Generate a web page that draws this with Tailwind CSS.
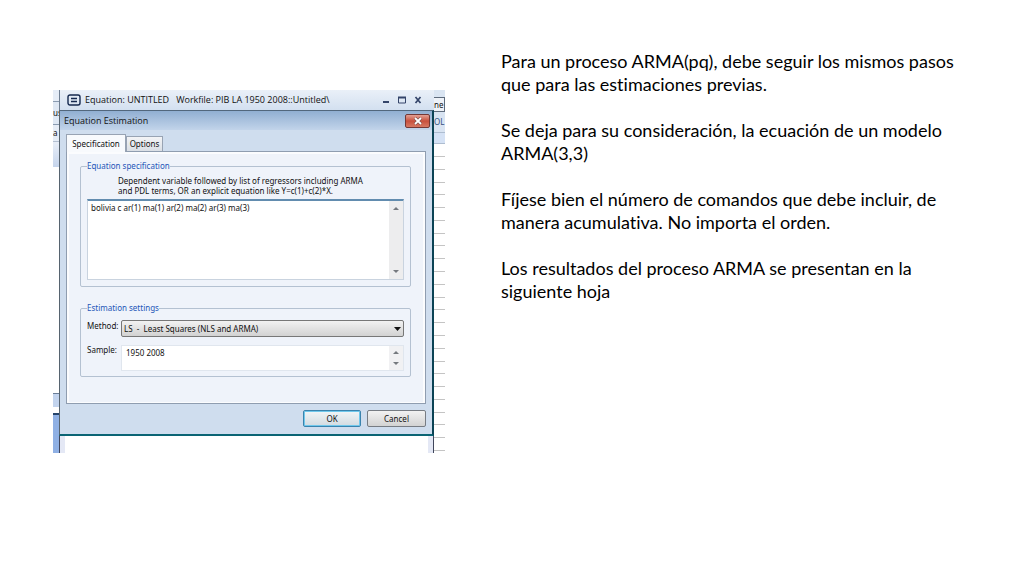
<!DOCTYPE html>
<html lang="es">
<head>
  <meta charset="UTF-8">
  <meta name="viewport" content="width=device-width, initial-scale=1.0">
  <title>Proceso ARMA</title>
  <script src="https://cdn.jsdelivr.net/npm/@tailwindcss/browser@4"></script>
</head>
<body class="bg-white">
  <main class="flex items-start gap-14 pt-[50px] pl-[53px] pr-16">

    <!-- EViews -->
    <section class="mt-10 flex w-[392px] shrink-0 overflow-hidden font-['Noto_Sans',sans-serif] text-[8px] leading-3 text-[#111]">

      <!-- Workfile window, left edge -->
      <div class="flex w-[6px] shrink-0 flex-col overflow-hidden">
        <div class="h-3 border-b border-[#8a9bb0] bg-[#e6edf7]"></div>
        <div class="flex h-[23px] items-center border-b border-[#8a9bb0] bg-[#dfe8f4]">us</div>
        <div class="flex h-[17px] items-center border-b border-[#b3bfd0] bg-[#e6edf7]">a</div>
        <div class="h-[25px] bg-linear-to-b from-[#e8eef8] to-[#c6d5ec]"></div>
        <div class="grow"></div>
        <div class="h-[14px] border-t border-[#6b7d96] bg-[#c3d4ee]"></div>
        <div class="mt-[6px] h-10 border-t-2 border-[#26446b] bg-[#8fb0e4]"></div>
      </div>

      <!-- Equation window -->
      <div class="flex grow flex-col">
        <header class="flex h-5 items-center border-l border-[#6f7f92] bg-linear-to-b from-[#eaf0f8] to-[#d3e0f0] pr-3 pl-[7px] font-['Open_Sans',sans-serif] text-[9px]">
          <svg class="mr-1 h-3 w-[14px]" viewBox="0 0 14 12" fill="none" stroke="#14284e">
            <rect x="1" y="1" width="12" height="10" rx="2" stroke-width="1.4"/>
            <path d="M4 4.5h6M4 7.5h6" stroke-width="1.4"/>
          </svg>
          <h2 class="grow whitespace-pre">Equation: UNTITLED   Workfile: PIB LA 1950 2008::Untitled\</h2>
          <div class="flex gap-2">
            <button aria-label="Minimize"><svg class="size-2" viewBox="0 0 8 8"><path d="M1 6h6" stroke="#34456a" stroke-width="2"/></svg></button>
            <button aria-label="Maximize"><svg class="size-2" viewBox="0 0 8 8"><path d="M.5 1v6h7V1" fill="none" stroke="#34456a"/><path d="M0 1.5h8" stroke="#34456a" stroke-width="2"/></svg></button>
            <button aria-label="Close window"><svg class="size-2" viewBox="0 0 8 8"><path d="M1.5 1l5 6M6.500 1l-5 6" stroke="#34456a" stroke-width="1.700"/></svg></button>
          </div>
        </header>

        <!-- Equation Estimation dialog -->
        <form class="border-t border-r-2 border-b-2 border-l border-t-[#52677d] border-r-[#0b4355] border-b-[#0a6474] border-l-[#56636f] bg-[#cfddee]">
          <div class="flex h-[19px] items-center justify-between bg-linear-to-b from-[#91afd2] to-[#c2d4ea] pr-[2px] pl-1">
            <h3 class="font-['Open_Sans',sans-serif] text-[9px]">Equation Estimation</h3>
            <button type="button" aria-label="Close" class="flex h-[14px] w-[25px] items-center justify-center rounded-xs border border-[#733836] bg-linear-to-b from-[#e2a094] via-[#c74f3d] to-[#d67863]">
              <svg class="h-2 w-[10px]" viewBox="0 0 10 8"><path d="M2 1l6 6M8 1L2 7" stroke="#6e4a4a" stroke-width="3"/><path d="M2 1l6 6M8 1L2 7" stroke="#fff" stroke-width="1.800"/></svg>
            </button>
          </div>

          <div class="px-[6px] pt-1">
            <div class="flex items-end" role="tablist">
              <button type="button" role="tab" aria-selected="true" class="relative z-10 -mb-px h-[18px] w-[60px] border border-b-0 border-[#98a3b3] bg-[#f8fafd]">Specification</button>
              <button type="button" role="tab" aria-selected="false" class="h-[15px] w-[37px] border border-b-0 border-[#98a3b3] bg-linear-to-b from-[#f3f4f6] to-[#dadfe5]">Options</button>
            </div>

            <div class="border border-[#8f9db0] bg-[#eff3fa] pt-2 pr-[14px] pb-[26px] pl-[13px] shadow-[inset_2px_2px_0_#fbfcfe,inset_-2px_-1px_0_#fbfcfe]">
              <fieldset class="rounded-xs border border-[#b4c1d1] px-[6px] pb-[6px]">
                <legend class="text-[#2456b8]">Equation specification</legend>
                <label for="equation" class="ml-[31px] block pt-1 pb-[3px] leading-[10px]">Dependent variable followed by list of regressors including ARMA<br>and PDL terms, OR an explicit equation like Y=c(1)+c(2)*X.</label>
                <div class="flex h-[81px] border border-t-2 border-[#c9d3df] border-t-[#628caf] bg-white">
                  <textarea id="equation" class="grow resize-none overflow-hidden px-[3px] pt-px outline-none">bolivia c ar(1) ma(1) ar(2) ma(2) ar(3) ma(3)</textarea>
                  <div class="flex w-[14px] flex-col items-center justify-between bg-[#ededee] py-[6px]">
                    <svg class="h-[3px] w-[6px]" viewBox="0 0 6 3"><path d="M0 3l3-3 3 3z" fill="#75797e"/></svg>
                    <svg class="h-[3px] w-[6px]" viewBox="0 0 6 3"><path d="M0 0l3 3 3-3z" fill="#75797e"/></svg>
                  </div>
                </div>
              </fieldset>

              <fieldset class="mt-[15px] rounded-xs border border-[#b4c1d1] px-[6px] pt-[6px] pb-[5px]">
                <legend class="text-[#2456b8]">Estimation settings</legend>
                <div class="flex">
                  <label for="method" class="w-[34px] shrink-0">Method:</label>
                  <div class="relative grow">
                    <select id="method" class="h-[17px] w-full appearance-none rounded-xs border border-[#777] bg-linear-to-b from-[#f2f2f2] to-[#d2d2d2] pl-[2px]">
                      <option>LS&nbsp; -&nbsp; Least Squares (NLS and ARMA)</option>
                    </select>
                    <svg class="pointer-events-none absolute top-[7px] right-[3px] h-[4px] w-[7px]" viewBox="0 0 7 4"><path d="M0 0h7L3.500 4z" fill="#111"/></svg>
                  </div>
                </div>
                <div class="mt-2 flex">
                  <label for="sample" class="w-[34px] shrink-0 leading-[10px]">Sample:</label>
                  <div class="flex h-[26px] grow border border-[#e0e6ee] bg-white">
                    <textarea id="sample" class="grow resize-none overflow-hidden px-1 pt-px outline-none">1950 2008</textarea>
                    <div class="flex w-[14px] flex-col items-center justify-between bg-[#f1f1f3] py-[5px]">
                      <svg class="h-[3px] w-[6px]" viewBox="0 0 6 3"><path d="M0 3l3-3 3 3z" fill="#75797e"/></svg>
                      <svg class="h-[3px] w-[6px]" viewBox="0 0 6 3"><path d="M0 0l3 3 3-3z" fill="#75797e"/></svg>
                    </div>
                  </div>
                </div>
              </fieldset>
            </div>
          </div>

          <div class="flex justify-end gap-[6px] px-[6px] pt-[6px] pb-[7px]">
            <button type="submit" class="h-[17px] w-[58px] rounded-xs border border-[#3a83ad] bg-linear-to-b from-[#f1f5f7] to-[#d2dbe1] shadow-[inset_0_0_0_1px_#70c8ec]">OK</button>
            <button type="button" class="h-[17px] w-[59px] rounded-xs border border-[#777c83] bg-linear-to-b from-[#f2f2f2] to-[#d3d3d3]">Cancel</button>
          </div>
        </form>

        <div class="h-[17px] border-r border-l border-[#40465c] bg-white">
          <div class="h-full border-r-[5px] border-l-[5px] border-[#e4e8f5]"></div>
        </div>
      </div>

      <!-- Workfile window, right edge -->
      <div class="flex w-[11px] shrink-0 flex-col overflow-hidden">
        <div class="h-[7px] bg-[#dae5f2]"></div>
        <div class="flex h-[15px] items-center border border-l-0 border-[#5e6b7c] bg-[#eef2f8]">ne</div>
        <div class="flex h-5 items-center bg-[#d9e4f2] text-[#34507e]">OL</div>
        <div class="h-3 border-y border-[#aebdd0] bg-[#d5e2f5]"></div>
        <div class="h-[13px] shrink-0 border-b border-[#c4c4c4]"></div>
        <div class="flex grow flex-col divide-y divide-[#c4c4c4] border-b border-[#c4c4c4]">
          <i class="grow"></i><i class="grow"></i><i class="grow"></i><i class="grow"></i>
          <i class="grow"></i><i class="grow"></i><i class="grow"></i><i class="grow"></i>
          <i class="grow"></i><i class="grow"></i><i class="grow"></i><i class="grow"></i>
          <i class="grow"></i><i class="grow"></i><i class="grow"></i><i class="grow"></i>
          <i class="grow"></i><i class="grow"></i><i class="grow"></i><i class="grow"></i>
          <i class="grow"></i><i class="grow"></i><i class="grow"></i>
        </div>
        <div class="h-[2px]"></div>
      </div>
    </section>

    <!-- Notas -->
    <article class="max-w-[460px] space-y-[23px] font-['Lato',sans-serif] text-[18px] leading-[23px] text-black [font-variant-ligatures:none]">
      <p>Para un proceso ARMA(pq), debe seguir los mismos pasos que para las estimaciones previas.</p>
      <p>Se deja para su consideración, la ecuación de un modelo ARMA(3,3)</p>
      <p>Fíjese bien el número de comandos que debe incluir, de manera acumulativa. No importa el orden.</p>
      <p>Los resultados del proceso ARMA se presentan en la siguiente hoja</p>
    </article>
  </main>
</body>
</html>
